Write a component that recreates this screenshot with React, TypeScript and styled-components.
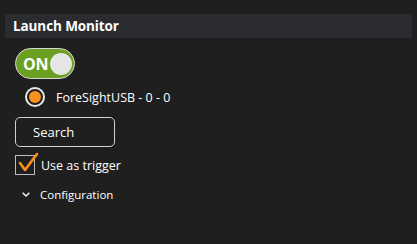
import React from "react";
import styled, { createGlobalStyle } from "styled-components";

const Global = createGlobalStyle`
  html, body { margin: 0; padding: 0; background: #1f1f1f; }
  body { font-family: "Open Sans", "Noto Sans", sans-serif; color: #ffffff; }
`;

const Page = styled.div`
  padding: 14px 5px 0 5px;
  height: 230px;
  box-sizing: border-box;
`;

const Header = styled.div`
  height: 24px;
  background: #2b2c2f;
  display: flex;
  align-items: center;
  padding-left: 8px;
  font-weight: 700;
  font-size: 13.5px;
  letter-spacing: -0.1px;
`;

const Body = styled.div`
  display: flex;
  flex-direction: column;
  align-items: flex-start;
  padding-left: 10px;
`;

const Toggle = styled.div`
  margin-top: 10px;
  width: 60px;
  height: 31px;
  box-sizing: border-box;
  border: 1.5px solid #d8d8d8;
  border-radius: 16px;
  background: #6a9f22;
  display: flex;
  align-items: center;
  justify-content: space-between;
  padding: 0 2.5px 0 7px;
`;

const ToggleLabel = styled.span`
  font-weight: 700;
  font-size: 16px;
  letter-spacing: -0.3px;
  color: #ffffff;
`;

const Knob = styled.span`
  width: 22px;
  height: 22px;
  border-radius: 50%;
  background: #e6e6e6;
`;

const RadioRow = styled.div`
  margin-top: 8px;
  display: flex;
  align-items: center;
  padding-left: 10px;
  gap: 11px;
  height: 20px;
  font-size: 12.5px;
`;

const RadioOuter = styled.span`
  width: 20px;
  height: 20px;
  box-sizing: border-box;
  border-radius: 50%;
  border: 2px solid #e8e8e8;
  background: #1f1f1f;
  display: flex;
  align-items: center;
  justify-content: center;
`;

const RadioDot = styled.span`
  width: 12px;
  height: 12px;
  border-radius: 50%;
  background: #f7921e;
`;

const SearchButton = styled.button`
  margin-top: 10px;
  width: 100px;
  height: 30px;
  box-sizing: border-box;
  border: 1px solid #d0d0d0;
  border-radius: 5px;
  background: #1f1f1f;
  color: #ffffff;
  font-family: inherit;
  font-size: 13px;
  text-align: left;
  padding: 0 0 0 17px;
`;

const CheckRow = styled.div`
  margin-top: 8px;
  display: flex;
  align-items: center;
  gap: 6px;
  height: 20px;
  font-size: 12.5px;
`;

const CheckBox = styled.span`
  position: relative;
  width: 20px;
  height: 20px;
  box-sizing: border-box;
  border: 1.5px solid #bdbdbd;
`;

const CheckMark = styled.svg`
  position: absolute;
  left: -1.5px;
  top: -4.5px;
  overflow: visible;
`;

const ConfigRow = styled.div`
  margin-top: 9px;
  display: flex;
  align-items: center;
  padding-left: 7px;
  gap: 10px;
  height: 20px;
  font-size: 11.5px;
`;

export default function App() {
  return (
    <>
      <Global />
      <Page>
        <Header>Launch Monitor</Header>
        <Body>
          <Toggle>
            <ToggleLabel>ON</ToggleLabel>
            <Knob />
          </Toggle>
          <RadioRow>
            <RadioOuter>
              <RadioDot />
            </RadioOuter>
            <span>ForeSightUSB - 0 - 0</span>
          </RadioRow>
          <SearchButton>Search</SearchButton>
          <CheckRow>
            <CheckBox>
              <CheckMark width="24" height="24" viewBox="0 0 24 24">
                <path d="M5 11 L10 18 L22 2" fill="none" stroke="#f7921e" strokeWidth="2.6" strokeLinecap="round" strokeLinejoin="round" />
              </CheckMark>
            </CheckBox>
            <span>Use as trigger</span>
          </CheckRow>
          <ConfigRow>
            <svg width="8" height="5" viewBox="0 0 8 5">
              <path d="M0.7 0.7 L4 4 L7.3 0.7" fill="none" stroke="#ffffff" strokeWidth="1.3" />
            </svg>
            <span>Configuration</span>
          </ConfigRow>
        </Body>
      </Page>
    </>
  );
}
